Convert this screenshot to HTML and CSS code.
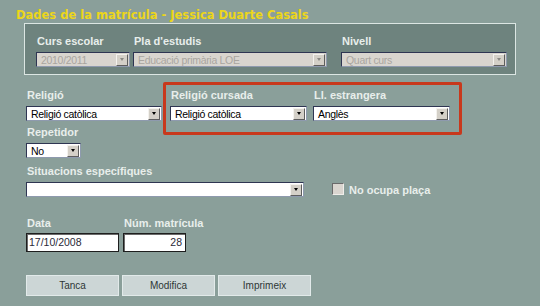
FILE: index.html
```html
<!DOCTYPE html>
<html lang="ca">
<head>
  <meta charset="utf-8">
  <title>Dades de la matrícula</title>
  <link rel="stylesheet" href="styles.css">
</head>
<body>

  <div class="page">
    <h1 class="title">Dades de la matrícula - Jessica Duarte Casals</h1>

    <div class="frame">
      <div class="field f-curs">
        <label>Curs escolar</label>
        <div class="select disabled"><span class="value">2010/2011</span><span class="arrow"></span></div>
      </div>
      <div class="field f-pla">
        <label>Pla d'estudis</label>
        <div class="select disabled"><span class="value">Educació primària LOE</span><span class="arrow"></span></div>
      </div>
      <div class="field f-nivell">
        <label>Nivell</label>
        <div class="select disabled"><span class="value">Quart curs</span><span class="arrow"></span></div>
      </div>
    </div>

    <div class="row row-religio">
      <div class="field f-religio">
        <label>Religió</label>
        <div class="select"><span class="value">Religió catòlica</span><span class="arrow"></span></div>
      </div>
      <div class="field f-cursada">
        <label>Religió cursada</label>
        <div class="select"><span class="value">Religió catòlica</span><span class="arrow"></span></div>
      </div>
      <div class="field f-llengua">
        <label>Ll. estrangera</label>
        <div class="select"><span class="value">Anglès</span><span class="arrow"></span></div>
      </div>
      <div class="highlight"></div>
    </div>

    <div class="row row-repetidor">
      <div class="field f-repetidor">
        <label>Repetidor</label>
        <div class="select"><span class="value">No</span><span class="arrow"></span></div>
      </div>
    </div>

    <div class="row row-situacions">
      <div class="field f-situacions">
        <label>Situacions específiques</label>
        <div class="select"><span class="value"></span><span class="arrow"></span></div>
      </div>
      <div class="check">
        <span class="box"></span>
        <span class="check-label">No ocupa plaça</span>
      </div>
    </div>

    <div class="row row-data">
      <div class="field f-data">
        <label>Data</label>
        <div class="input">17/10/2008</div>
      </div>
      <div class="field f-num">
        <label>Núm. matrícula</label>
        <div class="input num">28</div>
      </div>
    </div>

    <div class="buttons">
      <button>Tanca</button>
      <button>Modifica</button>
      <button>Imprimeix</button>
    </div>
  </div>

</body>
</html>
```

FILE: styles.css
```css
* {
  padding: 0;
  margin: 0;
  box-sizing: border-box;
}

body {
  background: #8a9f9a;
  font-family: "Liberation Sans", Arial, sans-serif;
}

.page {
  padding-top: 8px;
}

.title {
  font-family: "DejaVu Sans", Verdana, sans-serif;
  font-size: 11.5px;
  line-height: 14px;
  font-weight: bold;
  color: #ecd61a;
  margin-left: 16px;
}

/* fieldset with the course data */
.frame {
  display: flex;
  margin: 1px 0 0 24px;
  width: 492px;
  height: 52px;
  background: #6e837e;
  border: 1px solid #dce6e3;
  padding: 11px 0 0 11px;
}

.field {
  display: flex;
  flex-direction: column;
}

.field label {
  font-size: 11px;
  line-height: 13px;
  font-weight: bold;
  color: #e8eeeb;
  padding-left: 1px;
  margin-bottom: 4px;
  white-space: nowrap;
}

.f-curs { width: 94px; margin-right: 3px; }
.f-pla { width: 194px; margin-right: 14px; }
.f-nivell { width: 166px; }

.select {
  display: flex;
  align-items: center;
  height: 15px;
  background: #fff;
  border: 1px solid;
  border-color: #2e3552 #8e9aae #8e9aae #2e3552;
  font-size: 10.5px;
  color: #000;
}

.select .value {
  flex: 1;
  padding-left: 4px;
  white-space: nowrap;
  overflow: hidden;
  letter-spacing: -0.3px;
}

.select .arrow {
  width: 12px;
  height: 12px;
  margin-right: 1px;
  background: #d4d0c8;
  border: 1px solid;
  border-color: #f4f2ee #5e5e5e #5e5e5e #f4f2ee;
  display: flex;
  align-items: center;
  justify-content: center;
}

.select .arrow::after {
  content: "";
  border-style: solid;
  border-width: 3px 2.5px 0 2.5px;
  border-color: #000 transparent transparent transparent;
}

.select.disabled {
  background: #d9d5cf;
  color: #a9a59f;
}

.select.disabled .arrow::after {
  border-top-color: #8a8884;
}

.row {
  display: flex;
  margin-left: 26px;
}

.row-religio {
  position: relative;
  margin-top: 14px;
}

.f-religio { width: 136px; margin-right: 8px; }
.f-cursada { width: 137px; margin-right: 6px; }
.f-llengua { width: 137px; }

/* red annotation box drawn over the form */
.highlight {
  position: absolute;
  left: 137px;
  top: -7px;
  width: 299px;
  height: 53px;
  border: 3px solid #c8381c;
  border-radius: 2px;
}

.row-repetidor { margin-top: 5px; }
.f-repetidor { width: 55px; }

.row-situacions {
  margin-top: 7px;
  align-items: flex-end;
}

.f-situacions { width: 278px; }

.check {
  display: flex;
  align-items: center;
  margin: 0 0 1px 28px;
}

.check .box {
  width: 12px;
  height: 12px;
  background: #d9d5cf;
  border: 1px solid;
  border-color: #6a6a6a #f0eeea #f0eeea #6a6a6a;
}

.check-label {
  font-size: 11px;
  font-weight: bold;
  color: #e8eeeb;
  margin-left: 5px;
  padding-top: 3px;
}

.row-data { margin-top: 20px; }

.f-data { width: 93px; margin-right: 4px; }
.f-num { width: 63px; }

.row-data label {
  margin-bottom: 3px;
}

.input {
  height: 19px;
  background: #fff;
  border: 1px solid #1e1e1e;
  box-shadow: inset 1px 1px 0 #6a6a6a;
  font-size: 10.5px;
  line-height: 17px;
  padding: 0 3px 0 2px;
  color: #2a2a38;
}

.input.num {
  text-align: right;
}

.buttons {
  display: flex;
  gap: 3px;
  margin: 23px 0 0 26px;
}

.buttons button {
  width: 93px;
  height: 21px;
  background: #ccd6d6;
  border: 1px solid #e2eaea;
  font-family: "Liberation Sans", Arial, sans-serif;
  font-size: 10px;
  color: #2e3636;
}
```
